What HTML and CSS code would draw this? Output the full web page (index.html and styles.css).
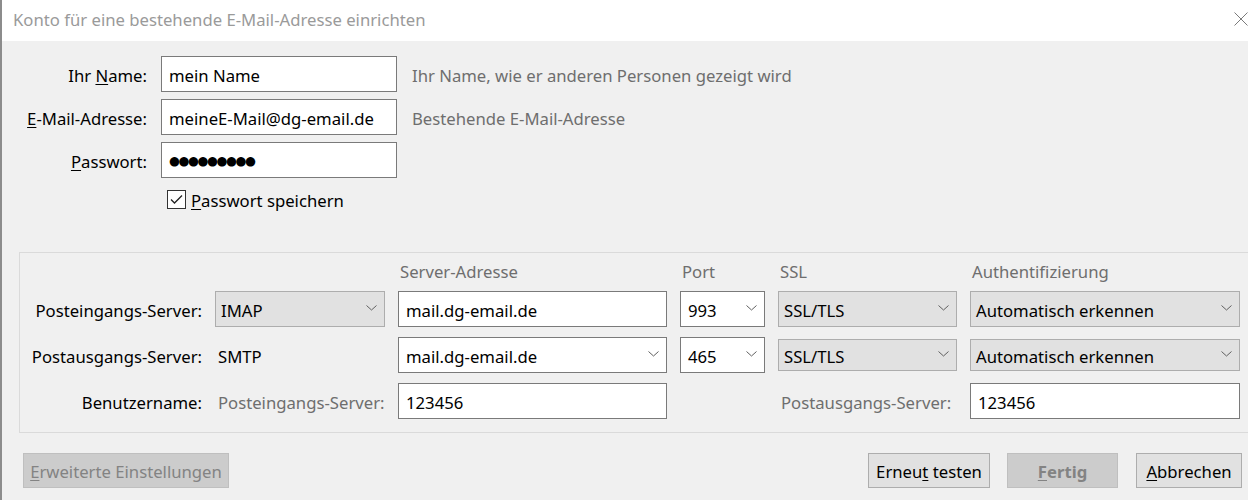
FILE: index.html
```html
<!DOCTYPE html>
<html lang="de">
<head>
<meta charset="utf-8">
<title>Konto einrichten</title>
<link rel="stylesheet" href="styles.css">
</head>
<body>
<div class="dialog">
  <div class="titlebar">
    <span class="title">Konto für eine bestehende E-Mail-Adresse einrichten</span>
    <svg class="close" width="14" height="14" viewBox="0 0 14 14"><path d="M0.5 0.5 L13.5 13.5 M13.5 0.5 L0.5 13.5" stroke="#7a7a7a" stroke-width="1" fill="none"/></svg>
  </div>
  <div class="content">
    <div class="identity">
      <span class="lbl">Ihr <u>N</u>ame:</span>
      <div class="field">mein Name</div>
      <span class="hint">Ihr Name, wie er anderen Personen gezeigt wird</span>

      <span class="lbl"><u>E</u>-Mail-Adresse:</span>
      <div class="field">meineE-Mail@dg-email.de</div>
      <span class="hint">Bestehende E-Mail-Adresse</span>

      <span class="lbl"><u>P</u>asswort:</span>
      <div class="field pw">●●●●●●●●●</div>
      <span></span>
    </div>

    <div class="remember">
      <span class="check"><svg width="17" height="17" viewBox="0 0 17 17"><path d="M3 8.5 L6.5 12 L14 4.5" stroke="#222" stroke-width="1.3" fill="none"/></svg></span>
      <span class="remember-text"><u>P</u>asswort speichern</span>
    </div>

    <div class="servers">
      <span></span>
      <span></span>
      <span class="colhead">Server-Adresse</span>
      <span class="colhead">Port</span>
      <span class="colhead">SSL</span>
      <span class="colhead">Authentifizierung</span>

      <span class="slbl">Posteingangs-Server:</span>
      <div class="sel gray"><span>IMAP</span><svg class="chev" width="11" height="6" viewBox="0 0 11 6"><path d="M0.5 0.5 L5.5 5 L10.5 0.5" stroke="#606060" stroke-width="1" fill="none"/></svg></div>
      <div class="field">mail.dg-email.de</div>
      <div class="sel"><span>993</span><svg class="chev" width="11" height="6" viewBox="0 0 11 6"><path d="M0.5 0.5 L5.5 5 L10.5 0.5" stroke="#606060" stroke-width="1" fill="none"/></svg></div>
      <div class="sel gray"><span>SSL/TLS</span><svg class="chev" width="11" height="6" viewBox="0 0 11 6"><path d="M0.5 0.5 L5.5 5 L10.5 0.5" stroke="#606060" stroke-width="1" fill="none"/></svg></div>
      <div class="sel gray"><span>Automatisch erkennen</span><svg class="chev" width="11" height="6" viewBox="0 0 11 6"><path d="M0.5 0.5 L5.5 5 L10.5 0.5" stroke="#606060" stroke-width="1" fill="none"/></svg></div>

      <span class="slbl">Postausgangs-Server:</span>
      <span class="plain">SMTP</span>
      <div class="sel"><span>mail.dg-email.de</span><svg class="chev" width="11" height="6" viewBox="0 0 11 6"><path d="M0.5 0.5 L5.5 5 L10.5 0.5" stroke="#606060" stroke-width="1" fill="none"/></svg></div>
      <div class="sel"><span>465</span><svg class="chev" width="11" height="6" viewBox="0 0 11 6"><path d="M0.5 0.5 L5.5 5 L10.5 0.5" stroke="#606060" stroke-width="1" fill="none"/></svg></div>
      <div class="sel gray short"><span>SSL/TLS</span><svg class="chev" width="11" height="6" viewBox="0 0 11 6"><path d="M0.5 0.5 L5.5 5 L10.5 0.5" stroke="#606060" stroke-width="1" fill="none"/></svg></div>
      <div class="sel gray short"><span>Automatisch erkennen</span><svg class="chev" width="11" height="6" viewBox="0 0 11 6"><path d="M0.5 0.5 L5.5 5 L10.5 0.5" stroke="#606060" stroke-width="1" fill="none"/></svg></div>

      <span class="slbl">Benutzername:</span>
      <span class="plain dim">Posteingangs-Server:</span>
      <div class="field">123456</div>
      <span></span>
      <span class="plain dim">Postausgangs-Server:</span>
      <div class="field">123456</div>
    </div>

    <div class="buttons">
      <button class="btn disabled"><u>E</u>rweiterte Einstellungen</button>
      <div class="spacer"></div>
      <button class="btn retest">Erneu<u>t</u> testen</button>
      <button class="btn disabled done"><u>F</u>ertig</button>
      <button class="btn cancel"><u>A</u>bbrechen</button>
    </div>
  </div>
</div>
</body>
</html>
```

FILE: styles.css
```css
html, body {
  margin: 0;
  padding: 0;
  height: 100%;
  overflow: hidden;
}

body {
  font-family: "Noto Sans", "Open Sans", "DejaVu Sans", sans-serif;
  font-size: 16.7px;
  color: #000;
  background: #f0f0f0;
}

.dialog {
  border-left: 2px solid #8c8c8c;
  height: 500px;
  box-sizing: border-box;
  background: #f0f0f0;
}

.titlebar {
  height: 41px;
  background: #fff;
  display: flex;
  align-items: center;
  justify-content: space-between;
  padding-left: 11px;
}

.title {
  color: #9a9a9a;
  margin-top: -2px;
}

.close {
  margin-top: -4px;
}

.content {
  padding-top: 15px;
}

u {
  text-decoration: underline;
  text-underline-offset: 2px;
  text-decoration-thickness: 1px;
}

/* identity */
.identity {
  display: grid;
  grid-template-columns: 145px 236px 1fr;
  grid-auto-rows: 36px;
  column-gap: 14px;
  row-gap: 7px;
  align-items: center;
}

.lbl {
  text-align: right;
  padding-top: 3px;
}

.field {
  height: 36px;
  box-sizing: border-box;
  background: #fff;
  border: 1px solid #7a7a7a;
  padding: 3px 7px 0;
  display: flex;
  align-items: center;
  white-space: nowrap;
  overflow: hidden;
}

.field.pw {
  font-family: "DejaVu Sans", sans-serif;
  font-size: 12.5px;
  letter-spacing: -1.4px;
  padding-top: 1px;
}

.hint {
  color: #6e6e6e;
  margin-left: 1px;
  padding-top: 3px;
}

.remember {
  display: flex;
  align-items: center;
  gap: 5px;
  margin: 11px 0 0 165px;
  height: 21px;
}

.remember-text {
  padding-top: 2px;
}

.check {
  width: 17px;
  height: 17px;
  border: 1px solid #333;
  background: #fff;
  display: flex;
}

/* servers group */
.servers {
  margin: 42px 0 0 17px;
  border: 1px solid #dadada;
  border-right: 0;
  padding: 10px 0 13px 0;
  display: grid;
  grid-template-columns: 182px 170px 269px 85px 179px 270px;
  grid-template-rows: 18px 36px 36px 36px;
  column-gap: 13px;
  row-gap: 10px;
  align-items: center;
}

.colhead {
  color: #6e6e6e;
  padding-left: 2px;
  line-height: 18px;
}

.slbl {
  text-align: right;
  padding-top: 3px;
}

.plain {
  padding-left: 3px;
  padding-top: 3px;
}

.dim {
  color: #6e6e6e;
}

.sel {
  height: 36px;
  box-sizing: border-box;
  background: #fff;
  border: 1px solid #7a7a7a;
  padding: 3px 7px 0 7px;
  display: flex;
  align-items: center;
  justify-content: space-between;
  white-space: nowrap;
}

.sel.gray {
  background: #e1e1e1;
  border-color: #adadad;
  padding-left: 5px;
}

.sel.short {
  height: 32px;
}

.chev {
  flex: none;
  margin-top: -5px;
}

/* buttons */
.buttons {
  display: flex;
  align-items: center;
  margin-top: 20px;
  padding: 0 6px 0 21px;
  gap: 17px;
}

.spacer {
  flex: 1;
}

.btn {
  height: 35px;
  font-family: inherit;
  font-size: 16.7px;
  border: 1px solid #adadad;
  background: #e1e1e1;
  color: #000;
  padding: 2px 6px 0;
  white-space: nowrap;
}

.btn.disabled {
  background: #cccccc;
  border-color: #bfbfbf;
  color: #838383;
  width: 206px;
}

.btn.retest {
  width: 122px;
}

.btn.done {
  width: 111px;
  font-weight: bold;
}

.btn.cancel {
  width: 106px;
  margin-left: 1px;
}
```
